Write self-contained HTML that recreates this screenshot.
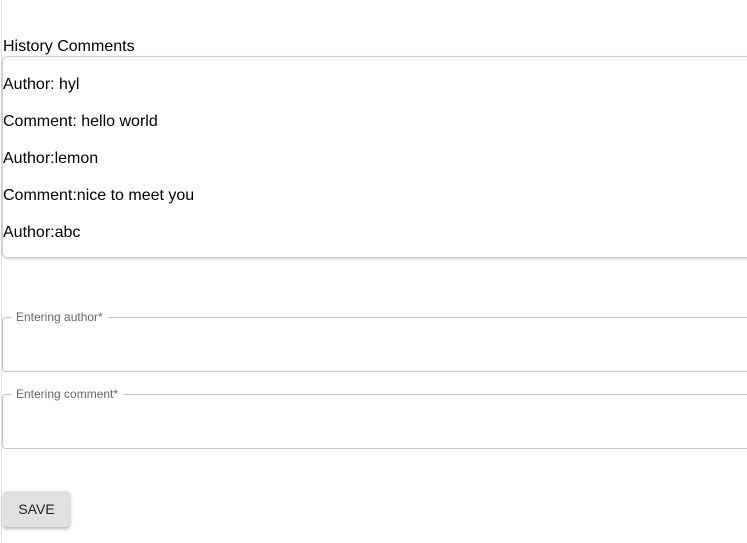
<!DOCTYPE html>
<html><head><style>
body{margin:0;width:747px;height:543px;overflow:hidden;background:#fff;font-family:"Liberation Sans",sans-serif;position:relative}
.vl{position:absolute;left:1px;top:0;width:1px;height:543px;background:#e0e0e0}
.title{position:absolute;left:3px;top:38px;font-size:16px;color:#000}
.box{position:absolute;left:2px;top:56px;width:760px;height:200px;border:1px solid #ccc;border-radius:6px;box-shadow:0 1px 2px rgba(0,0,0,.2)}
.box p{margin:0;position:absolute;left:0px;font-size:16px;color:#000}
fieldset{position:absolute;left:2px;width:760px;height:48px;margin:0;padding:0 8px;border:1px solid #c4c4c4;border-radius:4px;box-sizing:border-box}
legend{font-size:12px;color:#666;padding:0 5px;margin-left:0}
.btn{position:absolute;left:3px;top:491px;width:67px;height:36px;background:#e0e0e0;border-radius:4px;box-shadow:0 2px 3px rgba(0,0,0,.3);font-size:14px;color:#222;text-align:center;line-height:36px}
</style></head><body>
<div class="vl"></div>
<div class="title">History Comments</div>
<div class="box">
<p style="top:19px">Author: hyl</p>
<p style="top:56px">Comment: hello world</p>
<p style="top:93px">Author:lemon</p>
<p style="top:130px">Comment:nice to meet you</p>
<p style="top:167px">Author:abc</p>
</div>
<fieldset style="top:310px;height:62px"><legend>Entering author*</legend></fieldset>
<fieldset style="top:387px;height:62px"><legend>Entering comment*</legend></fieldset>
<div class="btn">SAVE</div>
</body></html>
